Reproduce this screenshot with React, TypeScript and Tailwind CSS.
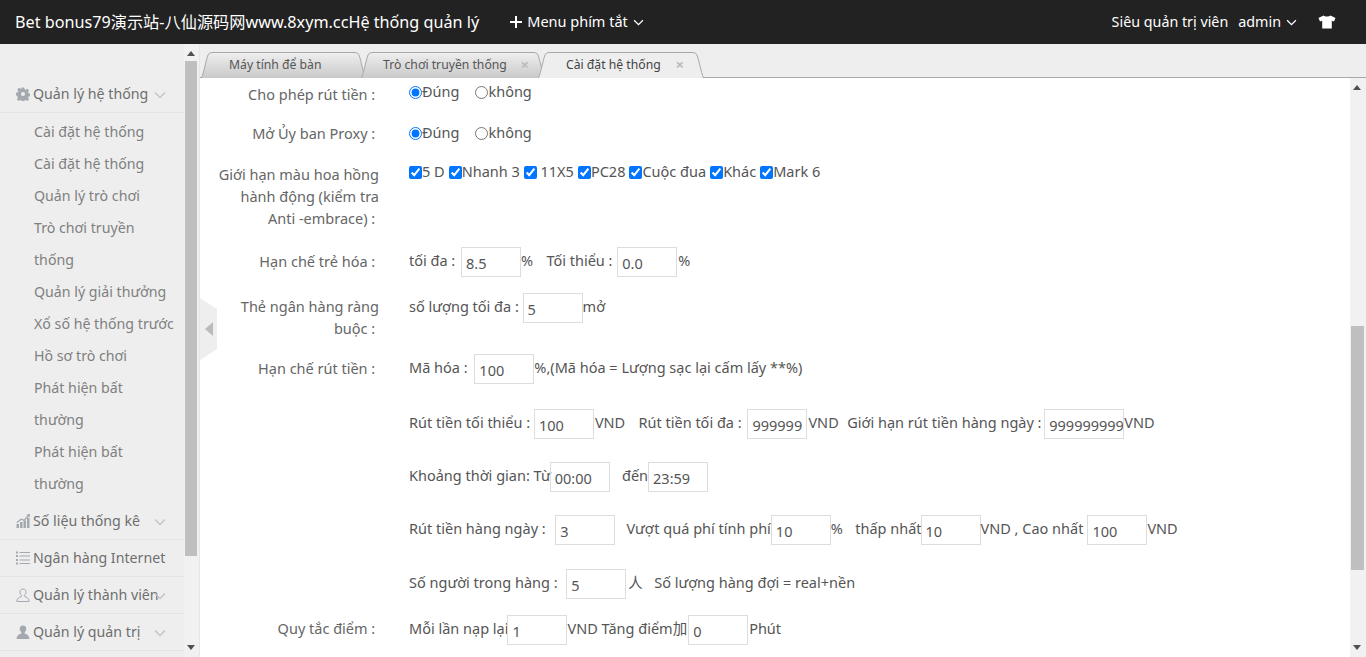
const FONT = "font-['Noto_Sans','Noto_Sans_CJK_SC',sans-serif]"

const Chevron = ({ className = "" }: { className?: string }) => (
  <svg viewBox="0 0 12 8" className={className} fill="none" stroke="currentColor" strokeWidth="1.5">
    <path d="M1 1.5 L6 6.5 L11 1.5" />
  </svg>
)

const GearIcon = () => (
  <svg viewBox="0 0 14 14" className="w-[14px] h-[14px] text-[#a4a9b0]" fill="currentColor">
    <path fillRule="evenodd" d="M5.8 0.5h2.4l.4 1.8 1.2.5 1.6-1 1.7 1.7-1 1.6.5 1.2 1.8.4v2.4l-1.8.4-.5 1.2 1 1.6-1.7 1.7-1.6-1-1.2.5-.4 1.8H5.8l-.4-1.8-1.2-.5-1.6 1-1.7-1.7 1-1.6-.5-1.2L0 8.1V5.7l1.8-.4.5-1.2-1-1.6L3 .8l1.6 1 1.2-.5zM7 5a2 2 0 1 0 0 4 2 2 0 0 0 0-4z" />
  </svg>
)

const ChartIcon = () => (
  <svg viewBox="0 0 14 14" className="w-[14px] h-[14px] text-[#a4a9b0]" fill="currentColor">
    <rect x="0.5" y="10" width="2.5" height="4" />
    <rect x="4" y="8" width="2.5" height="6" />
    <rect x="7.5" y="6.5" width="2.5" height="7.5" />
    <rect x="11" y="4" width="2.5" height="10" />
    <path d="M0.5 8 L5 4.5 L8 5.5 L11.5 1.5 L10 0.8 L14 0 L13.8 3.8 L12.6 2.6 L8.4 7 L5.2 6 L1 9.2z" />
  </svg>
)

const ListIcon = () => (
  <svg viewBox="0 0 14 14" className="w-[14px] h-[14px] text-[#a4a9b0]" fill="currentColor">
    <rect x="0" y="0.5" width="2" height="2" />
    <rect x="0" y="4" width="2" height="2" />
    <rect x="0" y="8" width="2" height="2" />
    <rect x="0" y="11.5" width="2" height="2" />
    <rect x="3.5" y="1" width="10.5" height="1" />
    <rect x="3.5" y="4.5" width="10.5" height="1" />
    <rect x="3.5" y="8.5" width="10.5" height="1" />
    <rect x="3.5" y="12" width="10.5" height="1" />
  </svg>
)

const UserOutlineIcon = () => (
  <svg viewBox="0 0 14 14" className="w-[14px] h-[14px] text-[#a4a9b0]" fill="none" stroke="currentColor" strokeWidth="1">
    <path d="M7 1c-2 0-3 1.300-3 3 0 1.500.7 2.600 1.500 3.300v1.200C3.500 9.300 1 10 .8 13.500h12.400C13 10 10.500 9.300 8.500 8.500V7.300C9.300 6.600 10 5.500 10 4c0-1.700-1-3-3-3z" />
  </svg>
)

const UserSolidIcon = () => (
  <svg viewBox="0 0 14 14" className="w-[14px] h-[14px] text-[#a4a9b0]" fill="currentColor">
    <path d="M7 .5c-2.200 0-3.300 1.400-3.300 3.300 0 1.500.7 2.800 1.600 3.500v1.200C3.300 9.300.8 10 .6 14h12.800c-.2-4-2.700-4.700-4.700-5.500V7.300c.9-.7 1.600-2 1.600-3.500C10.300 1.900 9.200.5 7 .5z" />
  </svg>
)

const ShirtIcon = () => (
  <svg viewBox="0 0 18 14" className="w-[18px] h-[14px] text-white" fill="currentColor">
    <path d="M5.500 0.500 C7 1.800 11 1.800 12.500 0.500 L17.500 3 L16 6.500 L13.800 5.800 L13.800 13.500 L4.200 13.500 L4.200 5.800 L2 6.500 L0.500 3z" />
  </svg>
)

const ScrollBar = ({ top, height, className = "" }: { top: number; height: number; className?: string }) => (
  <div className={`relative shrink-0 bg-[#f1f1f1] ${className}`}>
    <svg viewBox="0 0 8 5" className="absolute top-[7px] left-[3px] w-[8px] h-[5px]">
      <path d="M0 5 L4 0 L8 5z" fill="#505050" />
    </svg>
    <div className="absolute left-[1px] right-[2px] bg-[#bfbfbf]" style={{ top, height }} />
    <svg viewBox="0 0 8 5" className="absolute bottom-[7px] left-[3px] w-[8px] h-[5px]">
      <path d="M0 0 L4 5 L8 0z" fill="#505050" />
    </svg>
  </div>
)

const MenuHead = ({ icon, label, chevron = true }: { icon: React.ReactNode; label: string; chevron?: boolean }) => (
  <div className="relative h-[37px] flex items-center gap-[3px] pl-[16px] border-b border-[#e4e4e4] text-[#6f6f6f] text-[14.2px] whitespace-nowrap">
    {icon}
    <span>{label}</span>
    {chevron && <Chevron className="absolute left-[154px] top-[15px] w-[12px] h-[8px] text-[#c4c4c4]" />}
  </div>
)

const subMenu = [
  "Cài đặt hệ thống",
  "Cài đặt hệ thống",
  "Quản lý trò chơi",
  "Trò chơi truyền thống",
  "Quản lý giải thưởng",
  "Xổ số hệ thống trước",
  "Hồ sơ trò chơi",
  "Phát hiện bất thường",
  "Phát hiện bất thường",
]

const Sidebar = () => (
  <aside className="w-[200px] shrink-0 flex bg-[#eeeeee] border-r border-[#e6e6e6]">
    <div className="w-[184px] shrink-0 pt-[32px] overflow-hidden">
      <MenuHead icon={<GearIcon />} label="Quản lý hệ thống" />
      <ul className="pt-[3px] pb-[3px] pl-[34px] pr-[8px] text-[14.2px] leading-[32px] text-[#808080]">
        {subMenu.map((item, i) => (
          <li key={i}>{item}</li>
        ))}
      </ul>
      <MenuHead icon={<ChartIcon />} label="Số liệu thống kê" />
      <MenuHead icon={<ListIcon />} label="Ngân hàng Internet" chevron={false} />
      <MenuHead icon={<UserOutlineIcon />} label="Quản lý thành viên" />
      <MenuHead icon={<UserSolidIcon />} label="Quản lý quản trị" />
    </div>
    <ScrollBar top={17} height={495} className="w-[15px]" />
  </aside>
)

const Tab = ({
  label,
  active,
  width,
  textLeft,
  closeRight,
  className = "",
}: {
  label: string
  active?: boolean
  width: number
  textLeft: number
  closeRight?: number
  className?: string
}) => (
  <div className={`relative h-[26px] shrink-0 ${active ? "z-10" : ""} ${className}`} style={{ width }}>
    <svg className="absolute inset-0 w-full h-full" viewBox={`0 0 ${width} 26`} preserveAspectRatio="none">
      <defs>
        <linearGradient id="tabGrey" x1="0" y1="0" x2="0" y2="1">
          <stop offset="0" stopColor="#efefef" />
          <stop offset="1" stopColor="#c9c9c9" />
        </linearGradient>
      </defs>
      <path
        d={`M0.500 26 C3 20 5 8 7 3 Q8 0.500 11 0.500 L${width - 11} 0.500 Q${width - 8} 0.500 ${width - 7} 3 C${width - 5} 8 ${width - 3} 20 ${width - 0.5} 26`}
        fill={active ? "#eeeeee" : "url(#tabGrey)"}
        stroke="#a8a8a8"
      />
    </svg>
    <span
      className={`absolute top-[3px] text-[12.2px] leading-[20px] whitespace-nowrap ${active ? "text-[#444]" : "text-[#555]"}`}
      style={{ left: textLeft }}
    >
      {label}
    </span>
    {closeRight !== undefined && (
      <span className="absolute top-[2px] font-bold text-[#bbbbbb] text-[15px] leading-[20px]" style={{ right: closeRight }}>
        ×
      </span>
    )}
  </div>
)

const Field = ({ value, w = "w-[60px]", className = "" }: { value: string; w?: string; className?: string }) => (
  <input
    readOnly
    value={value}
    className={`${w} h-[30px] mt-[2px] shrink-0 border border-[#dddddd] pl-[4px] pt-[2px] text-[14.5px] text-[#555] outline-none ${className}`}
  />
)

const Row = ({ label, h, children, className = "" }: { label: React.ReactNode; h: number; children?: React.ReactNode; className?: string }) => (
  <div className="flex items-start" style={{ height: h }}>
    <div className={`w-[179px] shrink-0 text-right text-[#666] text-[14.5px] leading-[22px] ${className}`}>{label}</div>
    <div className="ml-[30px] flex items-center whitespace-pre text-[#555] text-[14.5px]">{children}</div>
  </div>
)

const Choice = ({ name, className = "" }: { name: string; className?: string }) => (
  <div className={`h-[22px] flex items-center ${className}`}>
    <input type="radio" name={name} defaultChecked className="m-0 w-[13px] h-[13px]" />
    <span>Đúng</span>
    <input type="radio" name={name} className="m-0 ml-[16px] w-[13px] h-[13px]" />
    <span>không</span>
  </div>
)

const Box = ({ label }: { label: string }) => (
  <span className="flex items-center">
    <input type="checkbox" defaultChecked readOnly className="m-0 w-[13px] h-[13px]" />
    <span>{label}</span>
  </span>
)

const App = () => {
  return (
    <div className={`${FONT} h-[657px] w-full flex flex-col overflow-hidden bg-white`}>
      {/* top bar */}
      <header className="h-[44px] shrink-0 bg-[#222222] text-white flex items-center pl-[15px] pr-[30px] whitespace-nowrap">
        <span className="text-[16.2px]">Bet bonus79演示站-八仙源码网www.8xym.ccHệ thống quản lý</span>
        <svg viewBox="0 0 12 12" className="ml-[31px] w-[12px] h-[12px]" fill="none" stroke="currentColor" strokeWidth="2">
          <path d="M6 0v12M0 6h12" />
        </svg>
        <span className="ml-[5px] text-[14.5px]">Menu phím tắt</span>
        <Chevron className="ml-[5px] w-[11px] h-[7px]" />
        <span className="ml-auto text-[14.3px]">Siêu quản trị viên</span>
        <span className="ml-[10px] text-[14.3px]">admin</span>
        <Chevron className="ml-[5px] w-[11px] h-[7px]" />
        <span className="ml-[21px]"><ShirtIcon /></span>
      </header>

      <div className="flex-1 flex min-h-0">
        <Sidebar />

        <main className="relative flex-1 min-w-0 flex flex-col">
          {/* tabs */}
          <div className="h-[34px] shrink-0 bg-[#eeeeee] border-b border-[#a8a8a8] flex items-end pl-[1px]">
            <Tab label="Máy tính để bàn" width={165} textLeft={28} className="-mb-[1px]" />
            <Tab label="Trò chơi truyền thống" width={184} textLeft={22} closeRight={16} className="-ml-[5px] -mb-[1px]" />
            <Tab label="Cài đặt hệ thống" active width={166} textLeft={28} closeRight={20} className="-ml-[7px] -mb-[1px]" />
          </div>

          <div className="flex-1 min-h-0 flex">
            <div className="flex-1 min-w-0 overflow-hidden pt-[4px]">
              <Row label={"Cho phép rút tiền :\u00a0"} h={40} className="pt-[1px]"><Choice name="withdraw" className="-mt-[1px]" /></Row>
              <Row label={"Mở Ủy ban Proxy :\u00a0"} h={39}><Choice name="proxy" /></Row>
              <Row label={<>Giới hạn màu hoa hồng<br />hành động (kiểm tra<br />{"Anti -embrace) :\u00a0"}</>} h={84} className="pt-[2px]">
                <div className="h-[22px] flex items-center gap-[4px]">
                  <Box label="5 D" />
                  <Box label="Nhanh 3" />
                  <Box label=" 11X5" />
                  <Box label="PC28" />
                  <Box label="Cuộc đua" />
                  <Box label="Khác" />
                  <Box label="Mark 6" />
                </div>
              </Row>
              <Row label={"Hạn chế trẻ hóa :\u00a0"} h={46} className="pt-[5px]">
                <span>tối đa : </span><Field value="8.5" className="ml-[2px]" />
                <span className="mr-[2px]">%   </span><span>Tối thiểu : </span><Field value="0.0" className="ml-[1px]" /><span className="ml-[1px]">%</span>
              </Row>
              <Row label={<>Thẻ ngân hàng ràng<br />{"buộc :\u00a0"}</>} h={61} className="pt-[4px]">
                <span>số lượng tối đa : </span><Field value="5" /><span>mở</span>
              </Row>
              <Row label={"Hạn chế rút tiền :\u00a0"} h={55} className="pt-[5px]">
                <span>Mã hóa : </span><Field value="100" className="ml-[3px]" />
                <span>%,(Mã hóa = Lượng sạc lại cấm lấy **%)</span>
              </Row>
              <Row label="" h={53}>
                <span>Rút tiền tối thiểu : </span><Field value="100" />
                <span className="ml-[1px] mr-[2px]">VND   </span><span>Rút tiền tối đa : </span><Field value="999999" className="ml-[2px]" />
                <span className="ml-[1px] mr-[1px]">VND  </span><span>Giới hạn rút tiền hàng ngày : </span><Field value="9999999999" w="w-[80px]" className="-ml-[1px]" />
                <span>VND</span>
              </Row>
              <Row label="" h={53}>
                <span>Khoảng thời gian: Từ</span><Field value="00:00" className="-ml-[1px]" />
                <span className="ml-[1px]">   đến</span><Field value="23:59" />
              </Row>
              <Row label="" h={54}>
                <span>Rút tiền hàng ngày :  </span><Field value="3" className="ml-[2px]" />
                <span>   Vượt quá phí tính phí</span><Field value="10" />
                <span className="mr-[1px]">%   </span><span>thấp nhất</span><Field value="10" className="-ml-[1px]" />
                <span>VND , Cao nhất</span><Field value="100" className="ml-[4px]" />
                <span>VND</span>
              </Row>
              <Row label="" h={46}>
                <span>Số người trong hàng :  </span><Field value="5" className="ml-[1px]" />
                <span className="ml-[2px] mr-[4px]">人  </span><span>Số lượng hàng đợi = real+nền</span>
              </Row>
              <Row label={"Quy tắc điểm :\u00a0"} h={40} className="pt-[4px]">
                <span>Mỗi lần nạp lại</span><Field value="1" className="-ml-[1px]" />
                <span>VND Tăng điểm加</span><Field value="0" className="ml-[1px]" />
                <span className="ml-[1px]">Phút</span>
              </Row>
            </div>
            <ScrollBar top={248} height={244} className="w-[16px]" />
          </div>

          {/* sidebar collapse handle */}
          <svg viewBox="0 0 18 62" className="absolute left-0 top-[254px] w-[18px] h-[62px]">
            <path d="M0 0 L17 11 L17 51 L0 62z" fill="#eeeeee" />
            <path d="M13 24 L5 31 L13 38z" fill="#bbbbbb" />
          </svg>
        </main>
      </div>
    </div>
  )
}

export default App
